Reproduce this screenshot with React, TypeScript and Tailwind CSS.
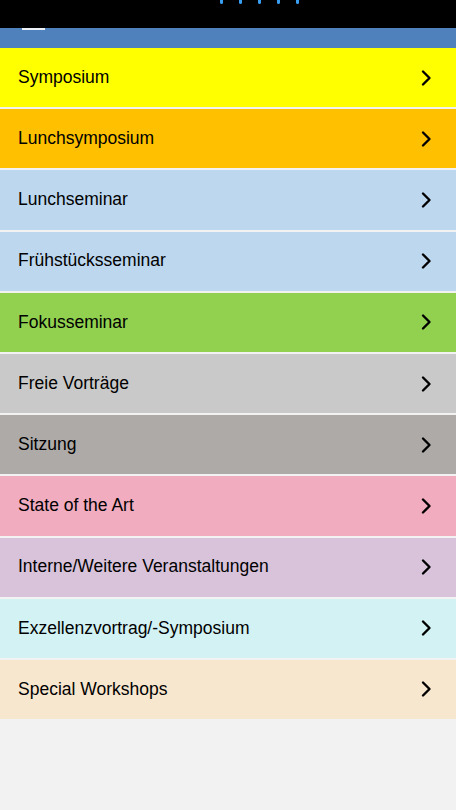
const items: { label: string; bg: string }[] = [
  { label: 'Symposium', bg: 'bg-[#ffff00]' },
  { label: 'Lunchsymposium', bg: 'bg-[#ffc000]' },
  { label: 'Lunchseminar', bg: 'bg-[#bdd7ee]' },
  { label: 'Frühstücksseminar', bg: 'bg-[#bdd7ee]' },
  { label: 'Fokusseminar', bg: 'bg-[#92d050]' },
  { label: 'Freie Vorträge', bg: 'bg-[#c9c9c9]' },
  { label: 'Sitzung', bg: 'bg-[#aeaaa7]' },
  { label: 'State of the Art', bg: 'bg-[#f2acbf]' },
  { label: 'Interne/Weitere Veranstaltungen', bg: 'bg-[#d8c3db]' },
  { label: 'Exzellenzvortrag/-Symposium', bg: 'bg-[#d3f2f3]' },
  { label: 'Special Workshops', bg: 'bg-[#f8e7cf]' },
];

const Chevron = () => (
  <svg width="12" height="18" viewBox="0 0 12 18" className="shrink-0">
    <path d="M3 2.5 L9.5 9 L3 15.5" fill="none" stroke="#000" strokeWidth="2.4" strokeLinecap="round" strokeLinejoin="round" />
  </svg>
);

export default function App() {
  return (
    <div className="w-[456px] h-[810px] bg-[#f2f2f2] flex flex-col overflow-hidden font-['Liberation_Sans',Arial,sans-serif]">
      {/* Status bar */}
      <div className="h-[28px] bg-black flex gap-[16px] pl-[220px] shrink-0">
        {[0, 1, 2, 3, 4].map((i) => (
          <span key={i} className="w-[3px] h-[4px] bg-[#3a9ef0] rounded-b-sm" />
        ))}
      </div>

      {/* App header */}
      <div className="h-[20px] bg-[#4f81bd] shrink-0 pl-[22px]">
        <div className="w-[23px] h-[2px] bg-white/90" />
      </div>

      {/* Category list */}
      <div className="flex flex-col">
        {items.map((item) => (
          <div
            key={item.label}
            className={`${item.bg} h-[59.2px] mb-[2px] flex items-center justify-between pl-[18px] pr-[24px]`}
          >
            <span className="text-[17.5px] text-black leading-none">{item.label}</span>
            <Chevron />
          </div>
        ))}
      </div>
    </div>
  );
}
